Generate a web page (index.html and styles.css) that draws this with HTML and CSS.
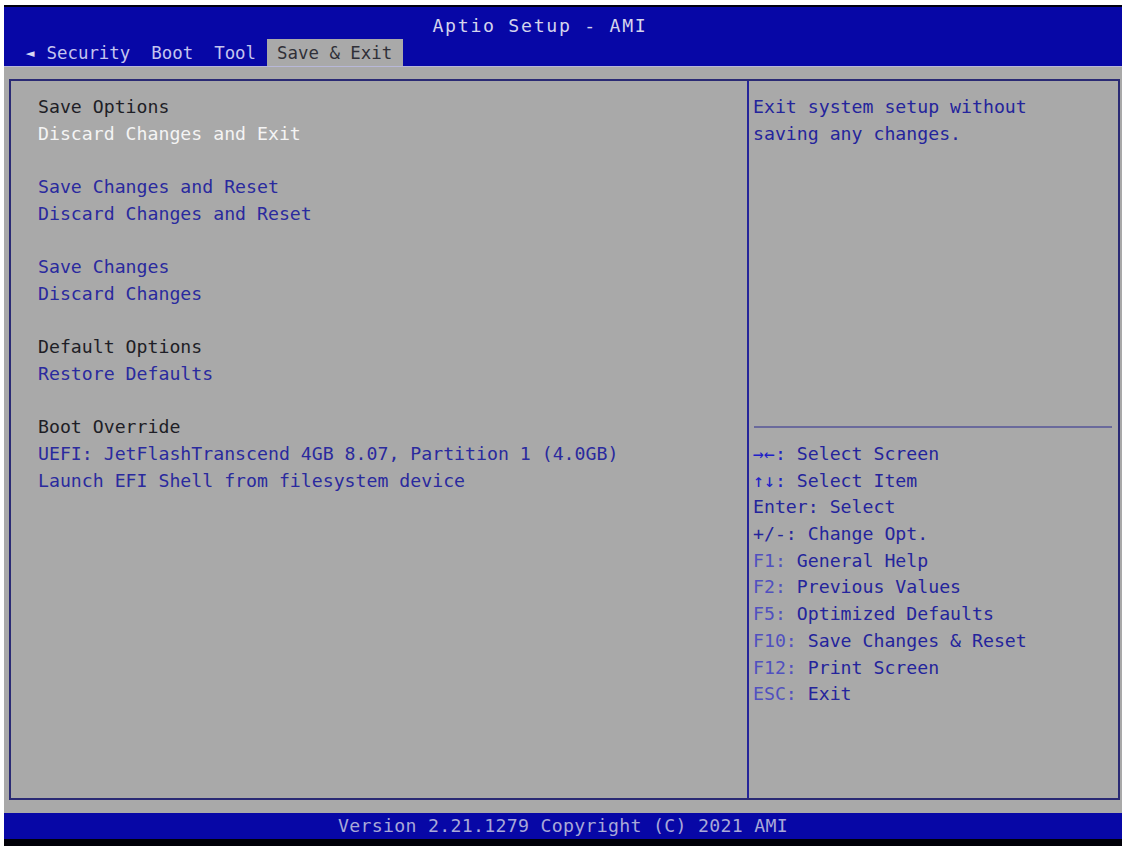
FILE: index.html
```html
<!DOCTYPE html>
<html>
<head>
<meta charset="utf-8">
<link rel="stylesheet" href="styles.css">
</head>
<body>
<div class="screen">
  <header class="header">
    <div class="title">Aptio Setup - AMI</div>
    <nav class="tabs">
      <span class="arrow">&#9668;</span>
      <span class="tab">Security</span>
      <span class="tab">Boot</span>
      <span class="tab">Tool</span>
      <span class="tab active">Save &amp; Exit</span>
    </nav>
  </header>
  <main class="main">
    <div class="frame">
      <section class="menu">
        <div class="row head">Save Options</div>
        <div class="row item selected">Discard Changes and Exit</div>
        <div class="row"></div>
        <div class="row item">Save Changes and Reset</div>
        <div class="row item">Discard Changes and Reset</div>
        <div class="row"></div>
        <div class="row item">Save Changes</div>
        <div class="row item">Discard Changes</div>
        <div class="row"></div>
        <div class="row head">Default Options</div>
        <div class="row item">Restore Defaults</div>
        <div class="row"></div>
        <div class="row head">Boot Override</div>
        <div class="row item">UEFI: JetFlashTranscend 4GB 8.07, Partition 1 (4.0GB)</div>
        <div class="row item">Launch EFI Shell from filesystem device</div>
      </section>
      <aside class="side">
        <div class="desc">
          <div class="row">Exit system setup without</div>
          <div class="row">saving any changes.</div>
        </div>
        <div class="rule"></div>
        <ul class="help">
          <li class="row"><span class="key hot">&#8594;&#8592;:</span> Select Screen</li>
          <li class="row"><span class="key hot">&#8593;&#8595;:</span> Select Item</li>
          <li class="row">Enter: Select</li>
          <li class="row">+/-: Change Opt.</li>
          <li class="row"><span class="key">F1:</span> General Help</li>
          <li class="row"><span class="key">F2:</span> Previous Values</li>
          <li class="row"><span class="key">F5:</span> Optimized Defaults</li>
          <li class="row"><span class="key">F10:</span> Save Changes &amp; Reset</li>
          <li class="row"><span class="key">F12:</span> Print Screen</li>
          <li class="row"><span class="key">ESC:</span> Exit</li>
        </ul>
      </aside>
    </div>
  </main>
  <footer class="footer">Version 2.21.1279 Copyright (C) 2021 AMI</footer>
</div>
</body>
</html>
```
FILE: styles.css
```css
html, body {
  margin: 0;
  padding: 0;
  background: #ffffff;
}
body {
  font-family: "DejaVu Sans Mono", "Liberation Mono", monospace;
  font-size: 18.2px;
}
.screen {
  margin: 5px 0 0 4px;
  width: 1118px;
  border-top: 2px solid #000010;
}
.header {
  background: #0707a6;
  height: 59px;
  display: flex;
  flex-direction: column;
  color: #d4d4ec;
}
.title {
  height: 32px;
  box-sizing: border-box;
  padding: 6px 46px 0 0;
  line-height: 26px;
  text-align: center;
  letter-spacing: 1.7px;
}
.tabs {
  height: 27px;
  display: flex;
  align-items: stretch;
  padding-left: 20px;
  font-size: 17.4px;
  line-height: 28px;
  color: #c4c4ee;
}
.arrow {
  width: 12px;
  font-size: 15px;
  text-align: center;
  color: #d8d8f4;
}
.tab {
  padding: 0 10.5px;
}
.tab.active {
  background: #a9a9a9;
  color: #303038;
}
.main {
  background: #a9a9a9;
  padding: 12px 2px 13px 5px;
  border-top: 1px solid #b8b8d8;
}
.frame {
  height: 721px;
  box-sizing: border-box;
  border: 2px solid #2a2a74;
  display: grid;
  grid-template-columns: 738px 1fr;
}
.row {
  height: 26.7px;
  line-height: 26.7px;
  white-space: pre;
}
.menu {
  padding: 13px 0 0 27px;
  border-right: 2px solid #24249a;
}
.head {
  color: #1e1e26;
}
.item {
  color: #2a2a9e;
}
.item.selected {
  color: #f4f4f4;
}
.side {
  display: flex;
  flex-direction: column;
  color: #24249c;
}
.desc {
  height: 345px;
  box-sizing: border-box;
  padding: 13px 0 0 4px;
}
.rule {
  height: 2px;
  margin: 0 6px 0 5px;
  background: #6a6a9c;
}
.help {
  list-style: none;
  margin: 0;
  padding: 13px 0 0 4px;
}
.key {
  color: #5050c0;
}
.key.hot {
  color: #2020c8;
}
.footer {
  background: #0707a6;
  height: 26px;
  line-height: 26px;
  text-align: center;
  color: #a8a8d8;
  letter-spacing: 0.3px;
  border-bottom: 7px solid #000008;
}
```
